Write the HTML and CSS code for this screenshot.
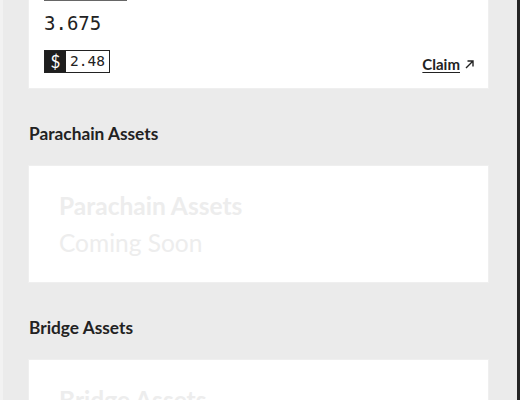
FILE: index.html
```html
<!DOCTYPE html>
<html lang="en">
<head>
<meta charset="utf-8">
<title>Assets</title>
<link rel="stylesheet" href="styles.css">
</head>
<body>
<main class="page">
  <section class="card card-top">
    <div class="rule"></div>
    <div class="amount">3.675</div>
    <div class="row">
      <div class="badge"><span class="badge-sym">$</span><span class="badge-val">2.48</span></div>
      <a class="claim" href="#"><span class="claim-text">Claim</span><svg class="claim-icon" width="9" height="9" viewBox="0 0 9 9" aria-hidden="true"><path d="M1 8 L8 1 M2.5 1 H8 V6.5" fill="none" stroke="#222" stroke-width="1.4"/></svg></a>
    </div>
  </section>

  <h2 class="heading">Parachain Assets</h2>
  <section class="card card-soon">
    <div class="soon">Parachain Assets</div>
    <div class="soon soon-sub">Coming Soon</div>
  </section>

  <h2 class="heading">Bridge Assets</h2>
  <section class="card card-soon">
    <div class="soon">Bridge Assets</div>
    <div class="soon soon-sub">Coming Soon</div>
  </section>
</main>
</body>
</html>
```

FILE: styles.css
```css
html {
  height: 100%;
  overflow: hidden;
}

body {
  margin: 0;
  height: 100%;
  box-sizing: border-box;
  background: #ebebeb;
  border-left: 3px solid #f2f2f2;
  border-right: 3px solid #242424;
  font-family: Lato, "Liberation Sans", sans-serif;
  color: #222;
}

.page {
  padding: 0 29px 0 26px;
  display: flex;
  flex-direction: column;
}

.card {
  background: #fff;
  box-shadow: 0 0 0 1px #efefef;
}

.card-top {
  padding: 0 14px 15px 15px;
  display: flex;
  flex-direction: column;
}

.rule {
  width: 83px;
  height: 1px;
  background: #666;
}

.amount {
  margin-top: 10px;
  font-family: "DejaVu Sans Mono", "Liberation Mono", monospace;
  font-size: 19px;
  line-height: 24px;
  color: #222;
}

.row {
  margin-top: 15px;
  display: flex;
  justify-content: space-between;
  align-items: flex-end;
}

.badge {
  display: flex;
  height: 23px;
  box-sizing: border-box;
  border: 1px solid #222;
}

.badge-sym {
  width: 21px;
  background: #1e1e1e;
  color: #fff;
  font-family: Lato, "Liberation Sans", sans-serif;
  font-size: 17px;
  line-height: 21px;
  text-align: center;
}

.badge-val {
  padding: 0 4px;
  font-family: "DejaVu Sans Mono", "Liberation Mono", monospace;
  font-size: 14.5px;
  line-height: 21px;
  color: #222;
}

.claim {
  display: flex;
  align-items: center;
  gap: 5px;
  color: #222;
  text-decoration: none;
  font-weight: 700;
  font-size: 15px;
  line-height: 18px;
}

.claim-text {
  text-decoration: underline;
  text-underline-offset: 2px;
}

.claim-icon {
  margin-top: 1px;
}

.heading {
  margin: 34px 0 20px;
  font-size: 17.3px;
  line-height: 24px;
  font-weight: 700;
  color: #222;
}

.card-soon {
  padding: 21px 30px;
}

.soon {
  font-size: 24.5px;
  line-height: 37px;
  font-weight: 700;
  color: #ededed;
}

.soon-sub {
  font-weight: 400;
}
```
